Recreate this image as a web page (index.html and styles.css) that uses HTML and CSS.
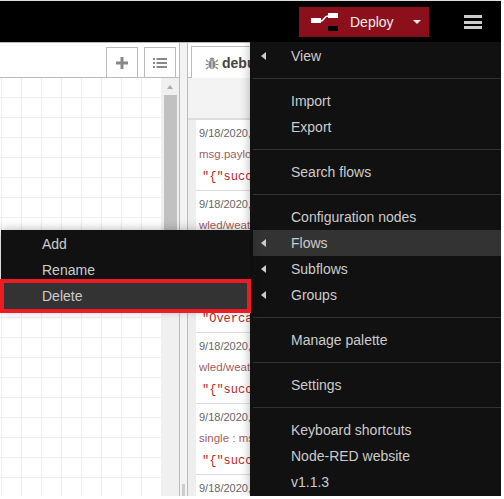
FILE: index.html
```html
<!DOCTYPE html>
<html lang="en">
<head>
    <meta charset="UTF-8">
    <title>Node-RED</title>
    <link rel="stylesheet" href="styles.css">
</head>
<body>

<div class="app">

    <div class="header">
        <div class="deploy">
            <svg class="deploy-icon" width="27" height="18" viewBox="0 0 27 18">
                <rect x="0" y="5" width="10" height="5" fill="#fff"/>
                <rect x="17" y="0" width="10" height="5" fill="#fff"/>
                <path d="M10 8 C13 8 13 3 17 3" fill="none" stroke="#fff" stroke-width="1.5"/>
                <rect x="17" y="13" width="10" height="5" fill="#000"/>
            </svg>
            <span class="deploy-label">Deploy</span>
            <span class="deploy-caret"></span>
        </div>
        <div class="burger">
            <span></span>
            <span></span>
            <span></span>
        </div>
    </div>

    <div class="main">
        <div class="workspace">
            <div class="tabbar">
                <div class="tab-btn">
                    <svg width="12" height="12" viewBox="0 0 12 12">
                        <path d="M4.5 0 H7.5 V4.5 H12 V7.5 H7.5 V12 H4.5 V7.5 H0 V4.5 H4.5 Z" fill="#888"/>
                    </svg>
                </div>
                <div class="tab-btn">
                    <svg width="14" height="12" viewBox="0 0 14 12">
                        <path d="M0 1 H2 V3 H0 Z M0 5 H2 V7 H0 Z M0 9 H2 V11 H0 Z M3.500 1 H14 V3 H3.500 Z M3.500 5 H14 V7 H3.500 Z M3.500 9 H14 V11 H3.500 Z" fill="#888"/>
                    </svg>
                </div>
            </div>
            <div class="canvas-wrap">
                <div class="canvas"></div>
                <div class="scrollbar">
                    <div class="scroll-up"></div>
                    <div class="scroll-thumb"></div>
                </div>
            </div>
        </div>

        <div class="separator">
            <div class="sep-thumb"></div>
        </div>

        <div class="sidebar">
            <div class="side-tabs">
                <div class="side-tab">
                    <svg width="14" height="14" viewBox="0 0 14 14">
                        <ellipse cx="7" cy="8.500" rx="3.600" ry="4.700" fill="#888"/>
                        <path d="M4.300 3.800 C5 1.200 9 1.200 9.700 3.800 Z" fill="#888"/>
                        <path d="M3.500 6 L1 4 M10.500 6 L13 4 M3 8.500 H0.500 M11 8.500 H13.500 M3.500 11 L1 13 M10.500 11 L13 13" stroke="#888" stroke-width="1.200" fill="none"/>
                        <path d="M7 4.500 V13" stroke="#fff" stroke-width="0.800"/>
                    </svg>
                    <span>debu</span>
                </div>
            </div>
            <div class="side-toolbar"></div>
            <div class="messages">
                <div class="msg">
                    <div class="msg-date">9/18/2020,</div>
                    <div class="msg-topic">msg.payloa</div>
                    <div class="msg-body">"{"succ</div>
                </div>
                <div class="msg">
                    <div class="msg-date">9/18/2020,</div>
                    <div class="msg-topic">wled/weath</div>
                    <div class="msg-body"></div>
                </div>
                <div class="msg">
                    <div class="msg-date"></div>
                    <div class="msg-topic"></div>
                    <div class="msg-body">"Overca</div>
                </div>
                <div class="msg">
                    <div class="msg-date">9/18/2020,</div>
                    <div class="msg-topic">wled/weath</div>
                    <div class="msg-body">"{"succ</div>
                </div>
                <div class="msg">
                    <div class="msg-date">9/18/2020,</div>
                    <div class="msg-topic">single : ms</div>
                    <div class="msg-body">"{"succ</div>
                </div>
                <div class="msg">
                    <div class="msg-date">9/18/2020,</div>
                </div>
            </div>
        </div>
    </div>

    <div class="menu main-menu">
        <div class="item sub">View</div>
        <div class="divider"></div>
        <div class="item">Import</div>
        <div class="item">Export</div>
        <div class="divider"></div>
        <div class="item">Search flows</div>
        <div class="divider"></div>
        <div class="item">Configuration nodes</div>
        <div class="item sub active">Flows</div>
        <div class="item sub">Subflows</div>
        <div class="item sub">Groups</div>
        <div class="divider"></div>
        <div class="item">Manage palette</div>
        <div class="divider"></div>
        <div class="item">Settings</div>
        <div class="divider"></div>
        <div class="item">Keyboard shortcuts</div>
        <div class="item">Node-RED website</div>
        <div class="item">v1.1.3</div>
    </div>

    <div class="menu context-menu">
        <div class="item">Add</div>
        <div class="item">Rename</div>
        <div class="item active marked">Delete</div>
    </div>

</div>

</body>
</html>
```

FILE: styles.css
```css
body {
    margin: 0;
    background: white;
    font-family: "Liberation Sans", Arial, sans-serif;
    overflow: hidden;
}

.app {
    position: relative;
    display: flex;
    flex-direction: column;
    width: 501px;
    height: 496px;
    overflow: hidden;
}

/* top bar */
.header {
    display: flex;
    justify-content: flex-end;
    align-items: flex-start;
    box-sizing: border-box;
    height: 43px;
    flex: none;
    background: black;
    border-top: 1px solid #ddd;
    border-bottom: 1px solid #bbb;
    padding: 6px 19px 0 0;
}

.deploy {
    display: flex;
    align-items: center;
    box-sizing: border-box;
    width: 130px;
    height: 30px;
    padding-left: 12px;
    background: #8c101c;
    color: #eee;
    font-size: 14px;
}

.deploy-icon {
    flex: none;
}

.deploy-label {
    margin-left: 12px;
}

.deploy-caret {
    margin-left: 19px;
    border-left: 4px solid transparent;
    border-right: 4px solid transparent;
    border-top: 4px solid #eee;
}

.burger {
    display: flex;
    flex-direction: column;
    gap: 2.5px;
    width: 18px;
    margin: 8px 0 0 35px;
}

.burger span {
    height: 3px;
    background: #ccc;
}

/* workspace */
.main {
    display: flex;
    flex: 1;
    min-height: 0;
}

.workspace {
    display: flex;
    flex-direction: column;
    width: 179px;
    flex: none;
}

.tabbar {
    display: flex;
    justify-content: flex-end;
    align-items: flex-end;
    gap: 6px;
    box-sizing: border-box;
    height: 35px;
    flex: none;
    padding-right: 3px;
    border-bottom: 1px solid #bbb;
    background: white;
}

.tab-btn {
    display: flex;
    justify-content: center;
    align-items: center;
    box-sizing: border-box;
    width: 32px;
    height: 31px;
    margin-bottom: -1px;
    border: 1px solid #bbb;
    background: white;
}

.canvas-wrap {
    display: flex;
    flex: 1;
}

.canvas {
    flex: 1;
    background-color: white;
    background-image: linear-gradient(#eee 1px, transparent 1px), linear-gradient(90deg, #eee 1px, transparent 1px);
    background-size: 20px 20px;
    background-position: 1px 19px;
}

.scrollbar {
    width: 18px;
    flex: none;
    background: #f0f0f0;
}

.scroll-up {
    width: 0;
    margin: 7px auto 0;
    border-left: 3.500px solid transparent;
    border-right: 3.500px solid transparent;
    border-bottom: 4px solid #aaa;
}

.scroll-thumb {
    width: 13px;
    height: 180px;
    margin: 6px 0 0 3px;
    background: #c1c1c1;
}

.separator {
    display: flex;
    flex-direction: column;
    justify-content: flex-end;
    box-sizing: border-box;
    width: 9px;
    flex: none;
    background: #f3f3f3;
    border-left: 1px solid #bbb;
    border-right: 1px solid #bbb;
}

.sep-thumb {
    width: 3px;
    height: 12px;
    margin-left: 2px;
    background: #ccc;
}

/* debug sidebar */
.sidebar {
    display: flex;
    flex-direction: column;
    flex: 1;
    min-width: 0;
    overflow: hidden;
}

.side-tabs {
    display: flex;
    align-items: flex-end;
    box-sizing: border-box;
    height: 35px;
    flex: none;
    padding-left: 3px;
    border-bottom: 1px solid #bbb;
    background: white;
}

.side-tab {
    display: flex;
    align-items: center;
    gap: 3px;
    box-sizing: border-box;
    width: 110px;
    height: 32px;
    margin-bottom: -1px;
    padding-left: 13px;
    border: 1px solid #bbb;
    border-bottom: none;
    background: white;
    color: #444;
    font-size: 14px;
    font-weight: bold;
}

.side-toolbar {
    height: 41px;
    flex: none;
    box-sizing: border-box;
    background: #f3f3f3;
    border-bottom: 1px solid #ddd;
}

.messages {
    flex: 1;
    padding-left: 8px;
    background: #eee;
    border-top: 1px solid #ddd;
    overflow: hidden;
}

.msg {
    box-sizing: border-box;
    height: 71px;
    padding: 2px 0 0 3px;
    background: white;
    border-bottom: 1px solid #ddd;
    white-space: nowrap;
    overflow: hidden;
}

.msg-date {
    height: 21px;
    line-height: 22px;
    color: #666;
    font-size: 11px;
}

.msg-topic {
    height: 22px;
    line-height: 22px;
    color: #a06060;
    font-size: 11.5px;
}

.msg-body {
    height: 22px;
    line-height: 24px;
    padding-left: 3px;
    color: #b72828;
    font-family: "Liberation Mono", monospace;
    font-size: 12px;
}

/* dropdown menus */
.menu {
    position: absolute;
    box-sizing: border-box;
    background: #111;
    color: #ccc;
    font-size: 14px;
    box-shadow: 0 0 10px rgba(0, 0, 0, 0.3);
}

.main-menu {
    top: 42px;
    left: 250px;
    width: 251px;
    height: 454px;
    padding: 1px 0 0 3px;
}

.context-menu {
    top: 230px;
    left: 1px;
    width: 249px;
    padding: 1px 3px 0 3px;
    height: 80px;
}

.item {
    display: flex;
    align-items: center;
    height: 26px;
    padding-left: 38px;
}

.item.sub {
    padding-left: 8px;
}

.item.sub::before {
    content: "";
    margin-right: 25px;
    border-top: 4px solid transparent;
    border-bottom: 4px solid transparent;
    border-right: 5px solid #ccc;
}

.item.active {
    background: #333;
}

.item.marked {
    outline: 4px solid #ed1c24;
}

.divider {
    height: 1px;
    margin: 9px 0;
    background: #333;
}
```
